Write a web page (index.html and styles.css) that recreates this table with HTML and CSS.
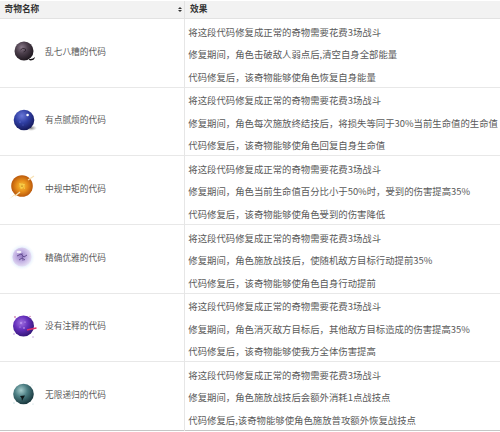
FILE: index.html
```html
<!DOCTYPE html>
<html lang="zh-CN">
<head>
<meta charset="utf-8">
<title>奇物</title>
<link rel="stylesheet" href="styles.css">
</head>
<body>
<div class="table">
  <div class="head">
    <div class="th th-name"><span>奇物名称</span><span class="sort"><i class="up"></i><i class="down"></i></span></div>
    <div class="th th-effect">效果</div>
  </div>

  <div class="row">
    <div class="cell name">
      <svg class="orb" viewBox="0 0 26 26">
        <defs>
          <radialGradient id="g1" cx="38%" cy="32%" r="70%">
            <stop offset="0" stop-color="#8a7a8a"/>
            <stop offset=".45" stop-color="#4c3f4c"/>
            <stop offset="1" stop-color="#1e171e"/>
          </radialGradient>
        </defs>
        <path d="M17 20.5 Q21 22 24 19 Q23.5 22.5 19 22.5 Z" fill="#141014"/>
        <circle cx="13" cy="13" r="9.5" fill="url(#g1)"/>
        <path d="M9.5 12 Q11.5 9 14.5 11 Q15.5 13.5 12.5 14" stroke="#2a212a" stroke-width=".8" fill="none"/>
      </svg>
      <span>乱七八糟的代码</span>
    </div>
    <div class="cell effect">
      <p>将这段代码修复成正常的奇物需要花费3场战斗</p>
      <p>修复期间，角色击破敌人弱点后,清空自身全部能量</p>
      <p>代码修复后，该奇物能够使角色恢复自身能量</p>
    </div>
  </div>

  <div class="row">
    <div class="cell name">
      <svg class="orb" viewBox="0 0 26 26">
        <defs>
          <radialGradient id="g2" cx="40%" cy="30%" r="70%">
            <stop offset="0" stop-color="#6a78d8"/>
            <stop offset=".5" stop-color="#2f3ea2"/>
            <stop offset="1" stop-color="#161a5c"/>
          </radialGradient>
          <radialGradient id="s2" cx="50%" cy="50%" r="50%">
            <stop offset="0" stop-color="#555" stop-opacity=".8"/>
            <stop offset="1" stop-color="#999" stop-opacity="0"/>
          </radialGradient>
        </defs>
        <ellipse cx="20" cy="21" rx="6" ry="3" fill="url(#s2)"/>
        <circle cx="13" cy="13" r="10.3" fill="url(#g2)"/>
        <circle cx="16.6" cy="8" r="1.3" fill="#fff"/>
        <circle cx="9" cy="15" r=".5" fill="#8fa0ff"/>
        <circle cx="12" cy="18" r=".4" fill="#8fa0ff"/>
      </svg>
      <span>有点腻烦的代码</span>
    </div>
    <div class="cell effect">
      <p>将这段代码修复成正常的奇物需要花费3场战斗</p>
      <p>修复期间，角色每次施放终结技后，将损失等同于30%当前生命值的生命值</p>
      <p>代码修复后，该奇物能够使角色回复自身生命值</p>
    </div>
  </div>

  <div class="row">
    <div class="cell name">
      <svg class="orb" viewBox="0 0 26 26">
        <defs>
          <radialGradient id="g3" cx="50%" cy="50%" r="55%">
            <stop offset="0" stop-color="#f6c23a"/>
            <stop offset=".45" stop-color="#e8901c"/>
            <stop offset="1" stop-color="#b24e08"/>
          </radialGradient>
        </defs>
        <path d="M-2 24 L10 14 L13 11 L16 12 L27 1 L14 14 L12 15 Z" fill="#f6dca8"/>
        <circle cx="11" cy="11" r="10.8" fill="url(#g3)"/>
        <path d="M8 11 L11 8 L14 11 L11 14 Z" fill="#f9d24a" opacity=".7"/>
        <circle cx="9" cy="9" r=".7" fill="#ffe66a"/>
        <circle cx="13" cy="9.5" r=".6" fill="#ffe66a"/>
        <circle cx="10" cy="13" r=".6" fill="#ffe66a"/>
        <circle cx="13.5" cy="13" r=".5" fill="#ffe66a"/>
        <circle cx="11" cy="11" r=".6" fill="#7a3a06"/>
        <path d="M4 21 L9 17" stroke="#f8e2b4" stroke-width="1.4"/>
        <path d="M17 5 L23 1" stroke="#f8e2b4" stroke-width="1.2"/>
      </svg>
      <span>中规中矩的代码</span>
    </div>
    <div class="cell effect">
      <p>将这段代码修复成正常的奇物需要花费3场战斗</p>
      <p>修复期间，角色当前生命值百分比小于50%时，受到的伤害提高35%</p>
      <p>代码修复后，该奇物能够使角色受到的伤害降低</p>
    </div>
  </div>

  <div class="row">
    <div class="cell name">
      <svg class="orb" viewBox="0 0 26 26">
        <defs>
          <radialGradient id="glow4" cx="50%" cy="50%" r="50%">
            <stop offset=".6" stop-color="#d6e6fa"/>
            <stop offset="1" stop-color="#eef5fe" stop-opacity="0"/>
          </radialGradient>
          <radialGradient id="g4" cx="45%" cy="45%" r="60%">
            <stop offset="0" stop-color="#9a80c8"/>
            <stop offset=".55" stop-color="#c8b8e6"/>
            <stop offset="1" stop-color="#ece8f8"/>
          </radialGradient>
        </defs>
        <circle cx="11" cy="13" r="13" fill="url(#glow4)"/>
        <circle cx="11" cy="13" r="9.6" fill="url(#g4)"/>
        <path d="M6 12 L10 10 L13 13 L16 11 M8 16 L11 14 L14 16" stroke="#5a4488" stroke-width=".9" fill="none"/>
        <path d="M11 9 L12 17" stroke="#6a5298" stroke-width=".7"/>
        <ellipse cx="8" cy="8" rx="2.5" ry="1.3" fill="#fff" opacity=".8"/>
      </svg>
      <span>精确优雅的代码</span>
    </div>
    <div class="cell effect">
      <p>将这段代码修复成正常的奇物需要花费3场战斗</p>
      <p>修复期间，角色施放战技后，使随机敌方目标行动提前35%</p>
      <p>代码修复后，该奇物能够使角色自身行动提前</p>
    </div>
  </div>

  <div class="row">
    <div class="cell name">
      <svg class="orb" viewBox="0 0 26 26">
        <defs>
          <radialGradient id="g5" cx="40%" cy="35%" r="65%">
            <stop offset="0" stop-color="#a070e0"/>
            <stop offset=".5" stop-color="#6530bc"/>
            <stop offset="1" stop-color="#36177a"/>
          </radialGradient>
        </defs>
        <circle cx="12.5" cy="13" r="10.5" fill="url(#g5)"/>
        <circle cx="10" cy="10" r=".8" fill="#d9b8ff"/>
        <circle cx="14" cy="9" r=".6" fill="#d9b8ff"/>
        <circle cx="9" cy="14" r=".6" fill="#c8a0ff"/>
        <circle cx="13" cy="15" r=".7" fill="#e0c0ff"/>
        <path d="M16 17 Q20 16 25.5 15" stroke="#e0306a" stroke-width="1.3" fill="none"/>
        <circle cx="4" cy="4" r=".9" fill="#d080b0"/>
        <circle cx="19" cy="3.5" r=".8" fill="#d080b0"/>
        <circle cx="3" cy="21" r=".8" fill="#b890d8"/>
        <circle cx="22" cy="24" r=".7" fill="#b890d8"/>
      </svg>
      <span>没有注释的代码</span>
    </div>
    <div class="cell effect">
      <p>将这段代码修复成正常的奇物需要花费3场战斗</p>
      <p>修复期间，角色消灭敌方目标后，其他敌方目标造成的伤害提高35%</p>
      <p>代码修复后，该奇物能够使我方全体伤害提高</p>
    </div>
  </div>

  <div class="row">
    <div class="cell name">
      <svg class="orb" viewBox="0 0 26 26">
        <defs>
          <radialGradient id="g6" cx="38%" cy="32%" r="68%">
            <stop offset="0" stop-color="#a6cccc"/>
            <stop offset=".45" stop-color="#4d7f84"/>
            <stop offset="1" stop-color="#1b3a40"/>
          </radialGradient>
        </defs>
        <circle cx="12.5" cy="13" r="10.3" fill="url(#g6)"/>
        <path d="M9 15 L14 14.5 L12.5 17 L11 20 L10.5 17 Z" fill="#0e1618"/>
        <circle cx="3" cy="22" r=".7" fill="#b8d4d8"/>
        <circle cx="22" cy="23" r=".6" fill="#b8d4d8"/>
        <circle cx="21" cy="4" r=".6" fill="#c8dce0"/>
      </svg>
      <span>无限递归的代码</span>
    </div>
    <div class="cell effect">
      <p>将这段代码修复成正常的奇物需要花费3场战斗</p>
      <p>修复期间，角色施放战技后会额外消耗1点战技点</p>
      <p>代码修复后,该奇物能够使角色施放普攻额外恢复战技点</p>
    </div>
  </div>
</div>
</body>
</html>
```

FILE: styles.css
```css
html, body {
  margin: 0;
  padding: 0;
  background: #ffffff;
}

body {
  font-family: "Noto Sans CJK SC", "Noto Sans", sans-serif;
  color: #595959;
}

.table {
  width: 500px;
  padding-top: 1px;
}

.head,
.row {
  display: grid;
  grid-template-columns: 184px 1fr;
  box-sizing: border-box;
}

.head {
  height: 18px;
  background: #f2f2f2;
  border-bottom: 1px solid #e2e2e2;
}

.th {
  display: flex;
  align-items: center;
  padding-bottom: 2px;
  font-size: 8.7px;
  font-weight: bold;
  color: #333333;
  white-space: nowrap;
}

.th-name {
  justify-content: space-between;
  padding-left: 4.5px;
  padding-right: 2px;
}

.th-effect {
  border-left: 1px solid #e2e2e2;
  padding-left: 5px;
}

.sort {
  display: flex;
  flex-direction: column;
  gap: 1px;
  margin-top: 1px;
}

.sort i {
  display: block;
  width: 0;
  height: 0;
  border-left: 2.2px solid transparent;
  border-right: 2.2px solid transparent;
}

.sort .up {
  border-bottom: 2.6px solid #333333;
}

.sort .down {
  border-top: 2.6px solid #333333;
}

.row {
  height: 68.68px;
  border-bottom: 1px solid #e8e8e8;
}

.row:last-child {
  border-bottom-color: #c6c6c6;
}

.cell.name {
  display: flex;
  align-items: center;
  padding-left: 11px;
  padding-bottom: 5px;
  font-size: 8.7px;
  white-space: nowrap;
}

.orb {
  width: 26px;
  height: 26px;
  flex: none;
  margin-right: 8px;
  overflow: visible;
}

.cell.effect {
  border-left: 1px solid #e6e6e6;
  padding-left: 3.3px;
  padding-top: 1.5px;
  display: flex;
  flex-direction: column;
}

.effect p {
  margin: 0;
  height: 22.5px;
  line-height: 22.5px;
  font-size: 9.4px;
  white-space: nowrap;
}
```
